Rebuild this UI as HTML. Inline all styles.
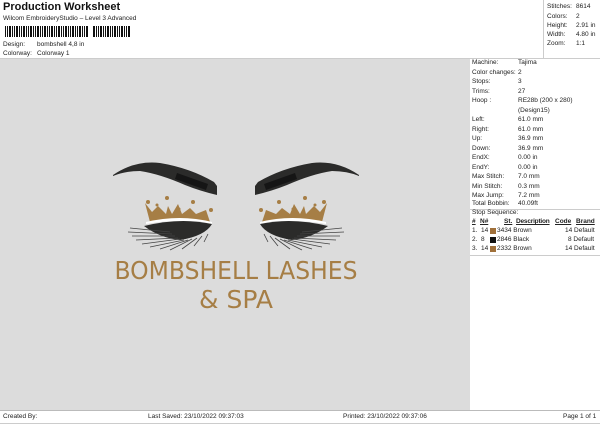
<!DOCTYPE html>
<html><head><style>
*{margin:0;padding:0;box-sizing:border-box}
body{width:600px;height:424px;background:#fff;font-family:"Liberation Sans",sans-serif;color:#222;position:relative;overflow:hidden;font-size:7px}
.a{position:absolute;white-space:nowrap}
.rp div{position:absolute;white-space:nowrap;font-size:6.5px;line-height:8px}
</style></head><body>
<div class="a" style="left:3px;top:1px;font-size:11px;font-weight:bold;color:#111">Production Worksheet</div>
<div class="a" style="left:3px;top:15px;font-size:6.5px">Wilcom EmbroideryStudio – Level 3 Advanced</div>
<div class="a" style="left:5px;top:26px;width:126px;height:11px;background:repeating-linear-gradient(90deg,#111 0 1px,#fff 1px 2px,#111 2px 3px,#fff 3px 4px,#111 4px 6px,#fff 6px 7px)"></div>
<div class="a" style="left:88px;top:26px;width:5px;height:12px;background:#fff"></div>
<div class="a" style="left:3px;top:41px;font-size:6.5px">Design:</div><div class="a" style="left:37px;top:41px;font-size:6.5px">bombshell 4,8 in</div>
<div class="a" style="left:3px;top:50px;font-size:6.5px">Colorway:</div><div class="a" style="left:37px;top:50px;font-size:6.5px">Colorway 1</div>
<div class="a" style="left:543px;top:0;width:1px;height:58px;background:#ccc"></div>
<div class="rp">
<div style="left:547px;top:3px">Stitches:</div><div style="left:576px;top:3px">8614</div>
<div style="left:547px;top:13px">Colors:</div><div style="left:576px;top:13px">2</div>
<div style="left:547px;top:22px">Height:</div><div style="left:576px;top:22px">2.91 in</div>
<div style="left:547px;top:31px">Width:</div><div style="left:576px;top:31px">4.80 in</div>
<div style="left:547px;top:40px">Zoom:</div><div style="left:576px;top:40px">1:1</div>
</div>
<div class="a" style="left:0;top:58px;width:600px;height:1px;background:#ccc"></div>
<div class="a" style="left:0;top:59px;width:470px;height:351px;background:#dcdcdc"></div>
<div class="a" style="left:0;top:410px;width:600px;height:1px;background:#bbb"></div>
<div class="a" style="left:0;top:423px;width:600px;height:1px;background:#ccc"></div>
<div class="rp">
<div style="left:472px;top:59px">Machine:</div><div style="left:518px;top:59px">Tajima</div>
<div style="left:472px;top:68.5px">Color changes:</div><div style="left:518px;top:68.5px">2</div>
<div style="left:472px;top:78px">Stops:</div><div style="left:518px;top:78px">3</div>
<div style="left:472px;top:87.5px">Trims:</div><div style="left:518px;top:87.5px">27</div>
<div style="left:472px;top:97px">Hoop :</div><div style="left:518px;top:97px">RE28b (200 x 280)</div>
<div style="left:518px;top:106.5px">(Design15)</div>
<div style="left:472px;top:116px">Left:</div><div style="left:518px;top:116px">61.0 mm</div>
<div style="left:472px;top:125.5px">Right:</div><div style="left:518px;top:125.5px">61.0 mm</div>
<div style="left:472px;top:135px">Up:</div><div style="left:518px;top:135px">36.9 mm</div>
<div style="left:472px;top:144.5px">Down:</div><div style="left:518px;top:144.5px">36.9 mm</div>
<div style="left:472px;top:154px">EndX:</div><div style="left:518px;top:154px">0.00 in</div>
<div style="left:472px;top:163.5px">EndY:</div><div style="left:518px;top:163.5px">0.00 in</div>
<div style="left:472px;top:173px">Max Stitch:</div><div style="left:518px;top:173px">7.0 mm</div>
<div style="left:472px;top:182.5px">Min Stitch:</div><div style="left:518px;top:182.5px">0.3 mm</div>
<div style="left:472px;top:192px">Max Jump:</div><div style="left:518px;top:192px">7.2 mm</div>
<div style="left:472px;top:200px">Total Bobbin:</div><div style="left:518px;top:200px">40.09ft</div>
<div style="left:470px;width:130px;height:1px;background:#ccc;top:209px"></div>
<div style="left:472px;top:209px">Stop Sequence:</div>
<div style="left:472px;top:218px;text-decoration:underline;font-weight:bold">#</div>
<div style="left:480px;top:218px;text-decoration:underline;font-weight:bold">N#</div>
<div style="left:504px;top:218px;text-decoration:underline;font-weight:bold">St.</div>
<div style="left:516px;top:218px;text-decoration:underline;font-weight:bold;letter-spacing:-0.2px">Description</div>
<div style="left:555px;top:218px;text-decoration:underline;font-weight:bold">Code</div>
<div style="left:576px;top:218px;text-decoration:underline;font-weight:bold">Brand</div>
<div style="left:472px;top:227px">1.&nbsp; 14</div><div style="left:490px;top:227.5px;width:6px;height:6px;background:#a0703a"></div><div style="left:497px;top:227px">3434 Brown</div><div style="left:565px;top:227px">14 Default</div>
<div style="left:472px;top:236px">2.&nbsp; 8</div><div style="left:490px;top:236.5px;width:6px;height:6px;background:#111"></div><div style="left:497px;top:236px">2846 Black</div><div style="left:568px;top:236px">8 Default</div>
<div style="left:472px;top:245px">3.&nbsp; 14</div><div style="left:490px;top:245.5px;width:6px;height:6px;background:#a0703a"></div><div style="left:497px;top:245px">2332 Brown</div><div style="left:565px;top:245px">14 Default</div>
</div>
<div class="a" style="left:470px;top:255px;width:130px;height:1px;background:#ccc"></div>
<svg class="a" style="left:0;top:0" width="470" height="410">
<defs>
<g id="eye">
<path fill="#2b2b2a" d="M113 175 Q135 160 160 163 Q190 168 214 182 L217 186 L217 195 Q200 191 185 185 Q160 174 140 171 Q125 171 113 176Z"/>
<path fill="#151515" d="M177 173 L208 184 L206 190 L175 179Z"/>
<g fill="#a67e45">
<path d="M145 203 L152 212 L158 206 L166 214 L168 206 L172 214 L178 204 L182 214 L190 208 L196 214 L206 210 L210 222 Q180 216 150 222Z"/>
<circle cx="148" cy="202" r="2"/><circle cx="167" cy="198" r="2"/><circle cx="193" cy="202" r="2"/><circle cx="211" cy="210" r="2"/><circle cx="157" cy="205" r="1.5"/><circle cx="179" cy="209" r="1.5"/>
</g>
<path fill="#fff" d="M146 222 Q180 214 212 222 L212 224 Q180 218 146 224Z"/>
<path fill="#2b2b2a" d="M144 226 Q180 217 212 224 Q205 236 180 240 Q160 238 144 226Z"/>
<g stroke="#444" stroke-width="0.8" fill="none">
<path d="M130 228 L170 232 M128 232 L172 234 M132 236 L175 236 M136 240 L178 238 M142 244 L180 239 M150 247 L184 240 M160 249 L188 240 M170 250 L192 239 M182 249 L197 238 M194 246 L202 236 M204 242 L208 234"/>
</g>
</g>
</defs>
<use href="#eye"/>
<use href="#eye" transform="translate(472 0) scale(-1 1)"/>
<text x="236" y="279" font-family="DejaVu Sans,sans-serif" font-size="25" fill="#a67e45" text-anchor="middle" textLength="243" lengthAdjust="spacingAndGlyphs">BOMBSHELL LASHES</text>
<text x="236" y="308" font-family="DejaVu Sans,sans-serif" font-size="25" fill="#a67e45" text-anchor="middle">&amp; SPA</text>
</svg>
<div class="a" style="left:3px;top:413px;font-size:6.5px">Created By:</div>
<div class="a" style="left:148px;top:413px;font-size:6.5px">Last Saved: 23/10/2022 09:37:03</div>
<div class="a" style="left:343px;top:413px;font-size:6.5px">Printed: 23/10/2022 09:37:06</div>
<div class="a" style="left:563px;top:413px;font-size:6.5px">Page 1 of 1</div>
</body></html>
